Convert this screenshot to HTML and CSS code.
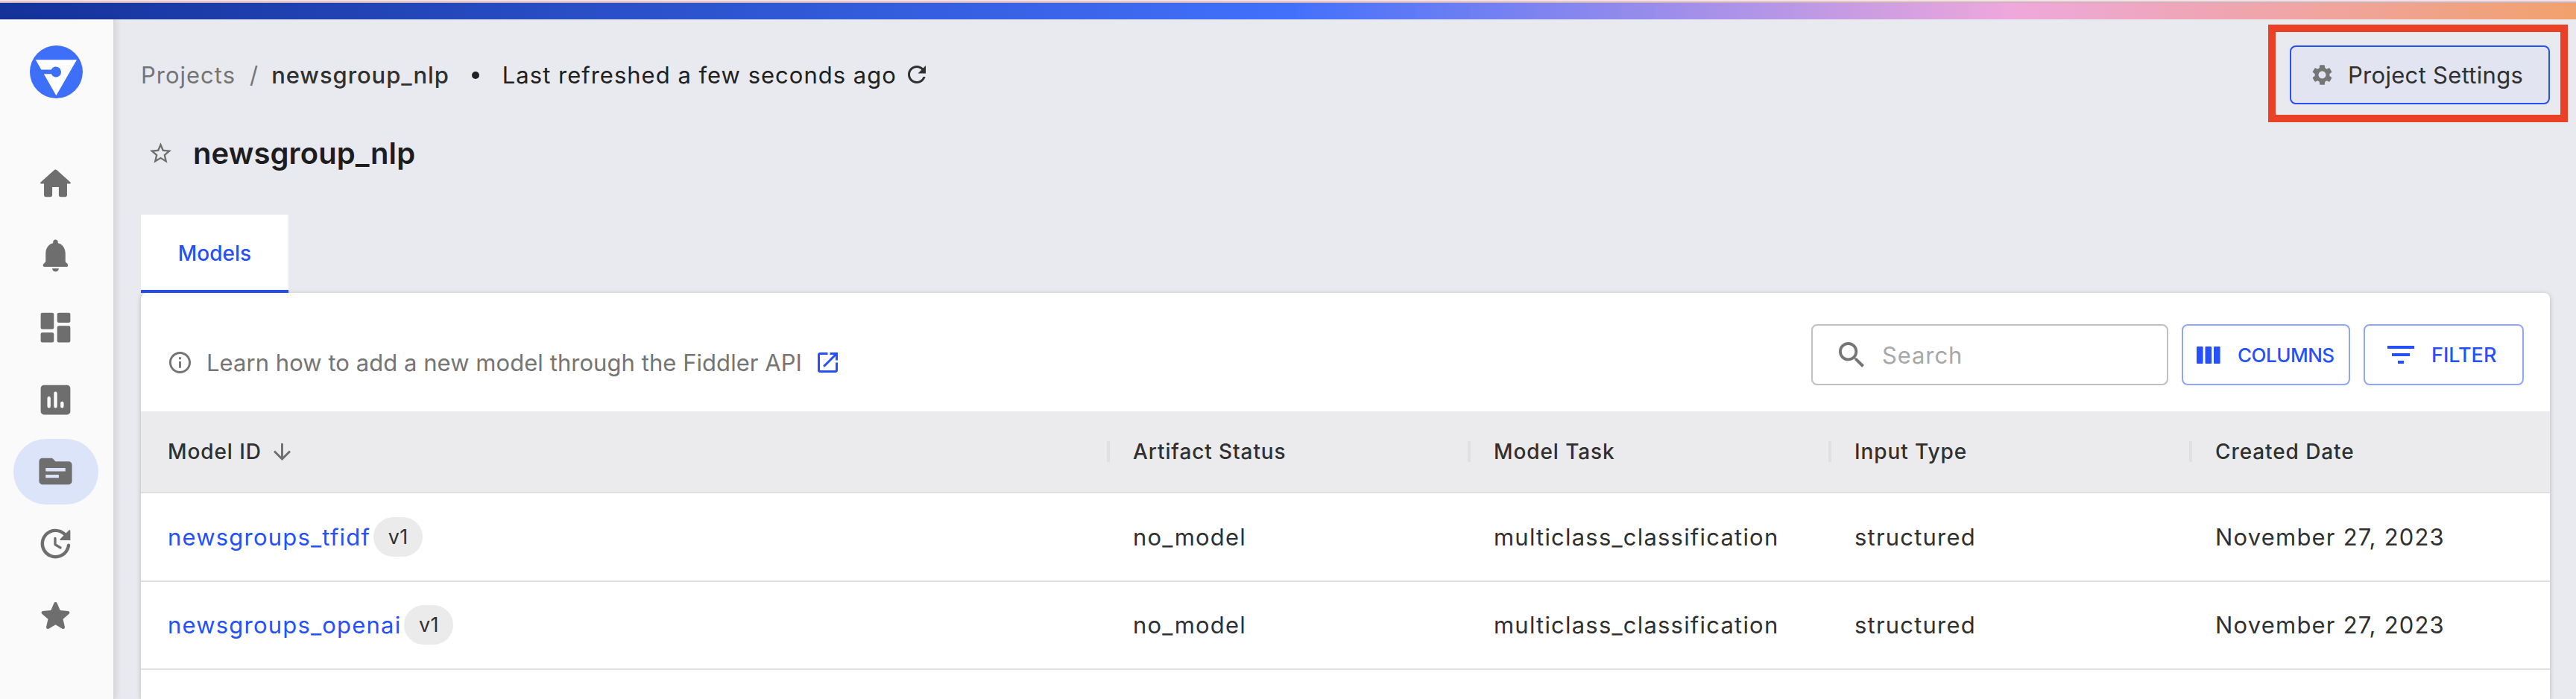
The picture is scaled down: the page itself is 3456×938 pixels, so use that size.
FILE: index.html
```html
<!DOCTYPE html>
<html lang="en">
<head>
<meta charset="utf-8">
<title>newsgroup_nlp</title>
<link rel="stylesheet" href="styles.css">
</head>
<body>
<div class="topbar"></div>
<div class="app">
  <nav class="sidebar">
    <svg class="logo" viewBox="0 0 71 71"><circle cx="35.5" cy="35.5" r="35.5" fill="#3d6ff8"/><path d="M7.8 19.3H63L35.4 67.3 18.8 38.3H28.7a7 7 0 1 0 0-5.8H15.4Z" fill="#fff"/></svg>
    <div class="nav">
      <a class="nav-item"><svg viewBox="0 0 24 24"><path d="M10 19v-5h4v5c0 .55.45 1 1 1h3c.55 0 1-.45 1-1v-7h1.7c.46 0 .68-.57.33-.87L12.67 3.6c-.38-.34-.96-.34-1.34 0l-8.36 7.53c-.34.3-.13.87.33.87H5v7c0 .55.45 1 1 1h3c.55 0 1-.45 1-1z"/></svg></a>
      <a class="nav-item"><svg viewBox="0 0 24 24"><path d="M12 22c1.1 0 2-.9 2-2h-4c0 1.1.89 2 2 2zm6-6v-5c0-3.07-1.64-5.64-4.5-6.32V4c0-.83-.67-1.5-1.5-1.5s-1.5.67-1.5 1.5v.68C7.63 5.36 6 7.92 6 11v5l-1.29 1.29c-.63.63-.19 1.71.7 1.71h13.17c.89 0 1.34-1.08.71-1.71L18 16z"/></svg></a>
      <a class="nav-item"><svg viewBox="0 0 24 24"><rect x="3" y="3" width="8" height="10" rx="1"/><rect x="13" y="3" width="8" height="6" rx="1"/><rect x="3" y="15" width="8" height="6" rx="1"/><rect x="13" y="11" width="8" height="10" rx="1"/></svg></a>
      <a class="nav-item"><svg viewBox="0 0 24 24"><rect x="3" y="3" width="18" height="18" rx="2"/><path d="M8 11v5M12 8v8M16 14v2" stroke="#fafafa" stroke-width="2" stroke-linecap="round"/></svg></a>
      <a class="nav-item active"><svg viewBox="0 0 24 24"><path d="M20 6h-8l-2-2H4c-1.1 0-1.99.9-1.99 2L2 18c0 1.1.9 2 2 2h16c1.1 0 2-.9 2-2V8c0-1.1-.9-2-2-2zm-6 10H6v-2h8v2zm4-4H6v-2h12v2z"/></svg></a>
      <a class="nav-item"><svg viewBox="0 0 24 24"><path d="M11 8.75v3.68c0 .35.19.68.49.86l3.12 1.85c.36.21.82.09 1.03-.26.21-.36.1-.82-.26-1.03l-2.87-1.71v-3.4c-.01-.4-.35-.74-.76-.74s-.75.34-.75.75zM21 10V4.21c0-.45-.54-.67-.85-.35l-1.78 1.78c-1.81-1.81-4.39-2.85-7.21-2.6-4.19.38-7.64 3.75-8.1 7.94C2.46 16.4 6.69 21 12 21c4.59 0 8.38-3.44 8.93-7.88.07-.6-.4-1.12-1-1.12-.5 0-.92.37-.98.86-.43 3.49-3.44 6.19-7.05 6.14-3.71-.05-6.84-3.18-6.9-6.9C4.94 8.2 8.11 5 12 5c1.93 0 3.68.79 4.95 2.05l-2.09 2.09c-.32.32-.1.86.35.86z"/></svg></a>
      <a class="nav-item"><svg viewBox="0 0 24 24"><path d="M12 17.27l4.15 2.51c.76.46 1.69-.22 1.49-1.08l-1.1-4.72 3.67-3.18c.67-.58.31-1.68-.57-1.75l-4.83-.41-1.89-4.46c-.34-.81-1.5-.81-1.84 0L9.19 8.63l-4.83.41c-.88.07-1.24 1.17-.57 1.75l3.67 3.18-1.1 4.72c-.2.86.73 1.54 1.49 1.08l4.15-2.5z"/></svg></a>
    </div>
  </nav>
  <main class="main">
    <header class="header">
      <div class="crumbs"><span class="crumb-link">Projects</span><span class="crumb-sep">/</span><span class="crumb-current">newsgroup_nlp</span><span class="dot"></span><span class="refreshed">Last refreshed a few seconds ago</span><svg class="refresh" viewBox="4 4 16 16"><path d="M17.65 6.35C16.2 4.9 14.21 4 12 4c-4.42 0-7.99 3.58-7.99 8s3.57 8 7.99 8c3.73 0 6.84-2.55 7.73-6h-2.08c-.82 2.33-3.04 4-5.65 4-3.31 0-6-2.69-6-6s2.69-6 6-6c1.66 0 3.14.69 4.22 1.78L13 11h7V4l-2.35 2.35z"/></svg></div>
      <div class="highlight"><button class="settings"><svg viewBox="0 0 24 24"><path d="M19.14 12.94c.04-.3.06-.61.06-.94 0-.32-.02-.64-.07-.94l2.03-1.58c.18-.14.23-.41.12-.61l-1.92-3.32c-.12-.22-.37-.29-.59-.22l-2.39.96c-.5-.38-1.03-.7-1.62-.94l-.36-2.54c-.04-.24-.24-.41-.48-.41h-3.84c-.24 0-.43.17-.47.41l-.36 2.54c-.59.24-1.13.57-1.62.94l-2.39-.96c-.22-.08-.47 0-.59.22L2.74 8.87c-.12.21-.08.47.12.61l2.03 1.58c-.05.3-.09.63-.09.94s.02.64.07.94l-2.03 1.58c-.18.14-.23.41-.12.61l1.92 3.32c.12.22.37.29.59.22l2.39-.96c.5.38 1.03.7 1.62.94l.36 2.54c.05.24.24.41.48.41h3.84c.24 0 .44-.17.47-.41l.36-2.54c.59-.24 1.13-.56 1.62-.94l2.39.96c.22.08.47 0 .59-.22l1.92-3.32c.12-.22.07-.47-.12-.61l-2.01-1.58zM12 15.6c-1.98 0-3.6-1.62-3.6-3.6s1.62-3.6 3.6-3.6 3.6 1.62 3.6 3.6-1.62 3.6-3.6 3.6z"/></svg><span>Project Settings</span></button></div>
    </header>
    <div class="title-row">
      <svg class="fav" viewBox="2 2 20 19"><path d="M22 9.24l-7.19-.62L12 2 9.19 8.63 2 9.24l5.46 4.73L5.82 21 12 17.27 18.18 21l-1.63-7.03L22 9.24zM12 15.4l-3.76 2.27 1-4.28-3.32-2.88 4.38-.38L12 6.1l1.71 4.04 4.38.38-3.32 2.88 1 4.28L12 15.4z"/></svg>
      <h1 class="title">newsgroup_nlp</h1>
    </div>
    <div class="tabs"><div class="tab">Models</div></div>
    <section class="card">
      <div class="toolbar">
        <div class="learn">
          <svg class="info" viewBox="2 2 20 20"><path d="M11 7h2v2h-2zm0 4h2v6h-2zm1-9C6.48 2 2 6.48 2 12s4.48 10 10 10 10-4.48 10-10S17.52 2 12 2zm0 18c-4.41 0-8-3.59-8-8s3.59-8 8-8 8 3.59 8 8-3.59 8-8 8z"/></svg>
          <span class="learn-text">Learn how to add a new model through the Fiddler API</span>
          <svg class="open" viewBox="3 3 18 18"><path d="M19 19H5V5h7V3H5c-1.11 0-2 .9-2 2v14c0 1.1.89 2 2 2h14c1.1 0 2-.9 2-2v-7h-2v7zM14 3v2h3.59l-9.83 9.83 1.41 1.41L19 6.41V10h2V3h-7z"/></svg>
        </div>
        <div class="actions">
          <div class="search"><svg viewBox="3 3 17.49 17.49"><path d="M15.5 14h-.79l-.28-.27C15.41 12.59 16 11.11 16 9.5 16 5.91 13.09 3 9.5 3S3 5.91 3 9.5 5.91 16 9.5 16c1.61 0 3.09-.59 4.23-1.57l.27.28v.79l5 4.99L20.49 19l-4.99-5zm-6 0C7.01 14 5 11.99 5 9.5S7.01 5 9.5 5 14 7.01 14 9.5 11.99 14 9.5 14z"/></svg><span>Search</span></div>
          <button class="btn columns"><svg viewBox="0 0 32 23"><rect width="8.6" height="23" rx="1"/><rect x="11.5" width="8.6" height="23" rx="1"/><rect x="23" width="8.6" height="23" rx="1"/></svg><span>COLUMNS</span></button>
          <button class="btn filter"><svg viewBox="3 6 18 12"><path d="M10 18h4v-2h-4v2zM3 6v2h18V6H3zm3 7h12v-2H6v2z"/></svg><span>FILTER</span></button>
        </div>
      </div>
      <div class="grid-row head">
        <div class="cell"><span>Model ID</span><svg class="sort" viewBox="4 4 16 16"><path d="M20 12l-1.41-1.41L13 16.17V4h-2v12.17l-5.58-5.59L4 12l8 8 8-8z"/></svg></div>
        <div class="cell">Artifact Status</div><div class="cell">Model Task</div><div class="cell">Input Type</div><div class="cell">Created Date</div>
      </div>
      <div class="grid-row">
        <div class="cell"><a class="model">newsgroups_tfidf</a><span class="chip">v1</span></div>
        <div class="cell">no_model</div><div class="cell">multiclass_classification</div><div class="cell">structured</div><div class="cell">November 27, 2023</div>
      </div>
      <div class="grid-row">
        <div class="cell"><a class="model">newsgroups_openai</a><span class="chip">v1</span></div>
        <div class="cell">no_model</div><div class="cell">multiclass_classification</div><div class="cell">structured</div><div class="cell">November 27, 2023</div>
      </div>
    </section>
  </main>
</div>
</body>
</html>
```
FILE: styles.css
```css
* { box-sizing: border-box; }
body {
  margin: 0;
  height: 938px;
  overflow: hidden;
  display: flex;
  flex-direction: column;
  background: #e9eaef;
  color: #303030;
  font-family: Inter, "Liberation Sans", sans-serif;
  font-size: 31px;
}
svg { display: block; flex: none; fill: currentColor; }
button { font: inherit; background: none; margin: 0; }
.topbar {
  flex: none;
  height: 26px;
  border-top: 2px solid #f9dfe6;
  background: linear-gradient(#c9b3b8 0 2px, transparent 2px), linear-gradient(90deg, #14329a 0%, #4270fb 50%, #eea8dc 78%, #f1a16c 100%);
}
.app { flex: 1; display: flex; min-height: 0; }
.sidebar {
  flex: none;
  width: 154px;
  padding-top: 35px;
  background: #fafafa;
  border-right: 2px solid #dadada;
  box-shadow: 2px 0 8px rgba(0, 0, 0, .1);
}
.logo { width: 71px; height: 71px; margin-left: 39.5px; }
.nav { display: flex; flex-direction: column; gap: 8.7px; margin: 70px 0 0 18px; }
.nav-item {
  width: 114px;
  height: 88px;
  border-radius: 44px;
  display: flex;
  align-items: center;
  justify-content: center;
  padding-right: 1.5px;
  color: #6e6e6e;
}
.nav-item svg { width: 53px; height: 53px; }
.nav-item.active { background: #dce4fa; }
.main { flex: 1; min-width: 0; display: flex; flex-direction: column; padding-left: 35px; }
.header { display: flex; justify-content: space-between; height: 138px; padding: 7px 11px 0 0; }
.crumbs { display: flex; align-items: center; height: 40px; margin-top: 47px; letter-spacing: 1px; white-space: nowrap; }
.crumb-link { color: #757575; }
.crumb-sep { margin: 0 17px 0 19px; color: #757575; }
.crumb-current { font-weight: 500; letter-spacing: .9px; }
.dot { width: 10px; height: 10px; border-radius: 50%; background: #212121; margin: 2px 31px 0 30px; }
.refreshed { color: #212121; }
.refresh { width: 24px; height: 24px; margin-left: 15px; }
.highlight { width: 402px; height: 131px; border: 10px solid #ea4025; padding: 18px 0 0 19px; }
.settings {
  display: flex;
  align-items: center;
  width: 349px;
  height: 79px;
  border: 2px solid #2650f8;
  border-radius: 8px;
  background: #e2e4f1;
  padding: 0 0 0 25px;
  color: #303030;
  letter-spacing: .3px;
  white-space: nowrap;
}
.settings svg { width: 33px; height: 33px; margin-right: 18px; color: #757575; }
.title-row { display: flex; align-items: center; height: 82px; padding-left: 12px; }
.fav { width: 29px; height: 28px; color: #6e6e6e; }
.title { margin: 0 0 0 29px; font-size: 40px; font-weight: 600; letter-spacing: .1px; color: #1d1d1d; }
.tabs { display: flex; margin-top: 42px; }
.tab {
  width: 198px;
  height: 105px;
  border-bottom: 4px solid #2650f8;
  background: #fff;
  color: #2650f8;
  font-size: 28px;
  font-weight: 450;
  line-height: 105px;
  text-align: center;
}
.card {
  flex: 1;
  width: 3232px;
  min-height: 0;
  background: #fff;
  border-radius: 8px 8px 0 0;
  box-shadow: 0 1px 6px rgba(0, 0, 0, .22);
}
.toolbar { display: flex; justify-content: space-between; height: 159px; padding: 42px 35px 0 38px; }
.learn { display: flex; align-items: center; height: 40px; margin-top: 31px; color: #757575; white-space: nowrap; }
.info { width: 29px; height: 29px; }
.learn-text { margin-left: 21px; letter-spacing: .05px; }
.open { width: 27px; height: 27px; margin-left: 21px; color: #2650f8; }
.actions { display: flex; gap: 18px; }
.search {
  display: flex;
  align-items: center;
  width: 479px;
  height: 82px;
  border: 2px solid #c0c0c0;
  border-radius: 8px;
  padding-left: 35px;
  color: #757575;
}
.search svg { width: 34px; height: 34px; }
.search span { margin-left: 24px; color: #a8a8a8; letter-spacing: .9px; }
.btn { display: flex; align-items: center; height: 82px; border: 2px solid #90a6fb; border-radius: 8px; color: #2650f8; padding: 0; font-weight: 450; }
.columns { width: 226px; padding-left: 18px; font-size: 26px; letter-spacing: -.5px; }
.columns svg { width: 32px; height: 23px; margin-right: 23px; }
.filter { width: 215px; padding-left: 30px; font-size: 27px; }
.filter svg { width: 36px; height: 24px; margin-right: 23px; }
.grid-row {
  display: grid;
  grid-template-columns: 1298px repeat(4, 484px);
  height: 118.5px;
  border-bottom: 2px solid #e0e0e0;
  letter-spacing: 1.2px;
}
.cell { display: flex; align-items: center; padding-left: 33px; white-space: nowrap; }
.cell:first-child { padding-left: 36px; }
.head { height: 110px; background: #ebebed; font-size: 28px; font-weight: 450; letter-spacing: .9px; }
.head .cell { position: relative; }
.head .cell + .cell::before {
  content: "";
  position: absolute;
  left: -2px;
  top: 40px;
  width: 4px;
  height: 28px;
  background: #e0e0e0;
}
.sort { width: 23px; height: 23px; margin-left: 16px; color: #6e6e6e; }
.model { color: #2650f8; }
.chip { width: 66px; height: 53px; margin-left: 4px; border-radius: 27px; background: #ebebeb; font-size: 27px; line-height: 53px; text-align: center; letter-spacing: .3px; }
```
